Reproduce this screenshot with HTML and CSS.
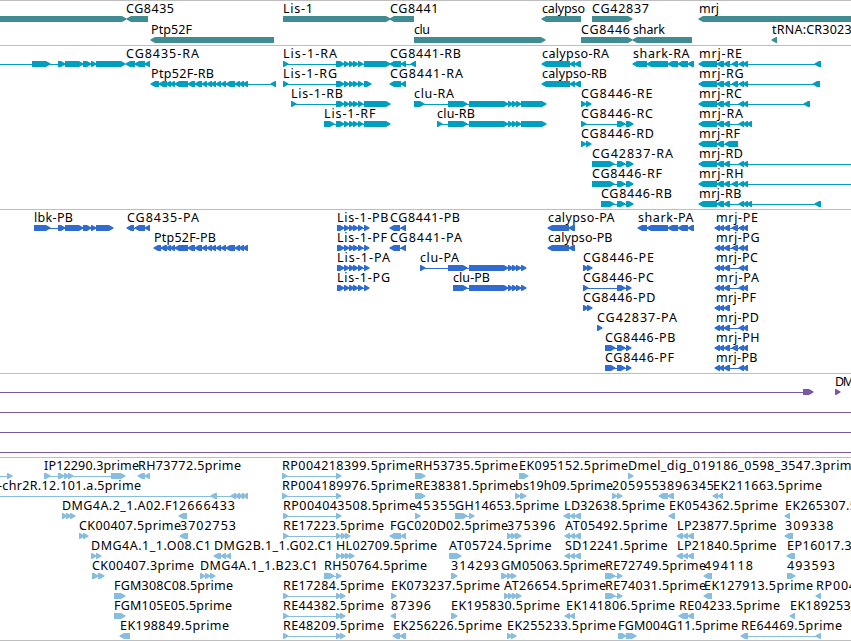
FILE: index.html
```html
<!DOCTYPE html>
<html lang="en">
<head>
    <meta charset="UTF-8">
    <meta name="viewport" content="width=device-width, initial-scale=1.0">
    <title>Genome Browser</title>
    <link rel="stylesheet" href="styles.css">
</head>
<body>
    <div class="browser">
        <svg class="track genes" id="genes"></svg>
        <svg class="track transcripts" id="transcripts"></svg>
        <svg class="track proteins" id="proteins"></svg>
        <svg class="track cdna" id="cdna"></svg>
        <svg class="track est" id="est"></svg>
    </div>
    <script src="tracks.js"></script>
</body>
</html>
```

FILE: styles.css
```css
body {
    margin: 0;
    background-color: #fff;
    overflow: hidden;
}
.browser {
    display: flex;
    flex-direction: column;
    width: 851px;
    border-bottom: 1px solid #bebebe;
}
.track {
    display: block;
    box-sizing: border-box;
    width: 100%;
    border-top: 1px solid #bebebe;
    overflow: hidden;
}
.track text {
    font-family: "Noto Sans", "DejaVu Sans", sans-serif;
    font-size: 12.5px;
    fill: #000;
}
.genes {
    height: 45px;
    color: #408c93;
}
.transcripts {
    height: 164px;
    color: #009fc0;
}
.proteins {
    height: 164px;
    color: #306ccf;
}
.cdna {
    height: 84px;
    color: #7859a8;
}
.est {
    height: 183px;
    color: #87bddf;
}
.feature {
    fill: currentColor;
}
.intron {
    shape-rendering: crispEdges;
}
```

FILE: tracks.js
```js
// feature: [row, label, label start, label end, strand, exons]
const LIS = '336-344 344-349 349-353 353-358 358-363 ';
const CLU = '448-467 469-508 508-512 512-516 516-521 ';
const PTP = '167-171 171-175 175-188 188-195 195-202 202-207 207-212 212-216 216-221 221-226 226-235 235-240 240-244 244-248';

const genes = [
    [0, '', 0, 0, '+', '-20-126'],
    [0, 'CG8435', 126, 174, '-', '127-148'],
    [1, 'Ptp52F', 151, 192, '-', '151-274'],
    [0, 'Lis-1', 283, 313, '+', '283-390'],
    [0, 'CG8441', 390, 438.5, '-', '390-414'],
    [1, 'clu', 414, 430, '+', '414-545'],
    [0, 'calypso', 542, 585, '-', '542-581'],
    [0, 'CG42837', 592, 649, '+', '592-632'],
    [1, 'CG8446', 581, 630, '+', '581-632'],
    [1, 'shark', 633, 665, '-', '633-692'],
    [0, 'mrj', 699, 719, '-', '699-880'],
    [1, 'tRNA:CR30233', 772, 859, '-', '772-777']
];

const transcripts = [
    [0, '', 0, 0, '+', '-20--10 32-50 58-65 65-83 83-91 91-96 96-125'],
    [0, 'CG8435-RA', 126, 199, '-', '126-135 135-145 145-150'],
    [1, 'Ptp52F-RB', 151, 214, '-', '151-159 159-167 ' + PTP + ' 271-276'],
    [0, 'Lis-1-RA', 283, 337, '+', '283-288 ' + LIS + '364-390'],
    [1, 'Lis-1-RG', 283, 337, '+', '283-288 ' + LIS + '364-371'],
    [2, 'Lis-1-RB', 291, 343, '+', '291-296 ' + LIS + '364-390'],
    [3, 'Lis-1-RF', 324, 375.5, '+', '324-334 ' + LIS + '364-390'],
    [0, 'CG8441-RB', 390, 461, '-', '390-401 401-406 411-416'],
    [1, 'CG8441-RA', 390, 463, '-', '390-401 401-406'],
    [2, 'clu-RA', 414, 454, '+', '414-424 ' + CLU + '521-546'],
    [3, 'clu-RB', 437, 475, '+', '437-442 ' + CLU + '521-546'],
    [0, 'calypso-RA', 542, 609, '-', '542-570 570-575 575-581'],
    [1, 'calypso-RB', 542, 607, '-', '542-570 570-575 575-581'],
    [0, 'shark-RA', 633, 689.5, '-', '633-647 647-668 668-678 678-688 688-694'],
    [2, 'CG8446-RE', 581, 652.5, '+', '581-586 586-591'],
    [3, 'CG8446-RC', 581, 653, '+', '581-586 617-625 626-633'],
    [4, 'CG8446-RD', 581, 654, '+', '581-586 586-591'],
    [5, 'CG42837-RA', 592, 673, '+', '592-614 617-625 626-633'],
    [6, 'CG8446-RF', 592, 662, '+', '592-614 617-625 626-633'],
    [7, 'CG8446-RB', 601, 672, '+', '601-614 617-625 626-633'],
    [0, 'mrj-RE', 699, 742, '-', '699-717 717-724 724-730 732-738 740-744 744-748 815-821'],
    [1, 'mrj-RG', 699, 743.5, '-', '699-717 717-724 724-730 732-738 740-744 744-748 813-820'],
    [2, 'mrj-RC', 699, 742, '-', '699-717 717-724 724-730 740-744 744-748 804-810'],
    [3, 'mrj-RA', 699, 743, '-', '699-717 717-724 724-730 740-744 744-748 748-752'],
    [4, 'mrj-RF', 699, 740, '-', '699-717 717-724 725-738'],
    [5, 'mrj-RD', 699, 743, '-', '699-717 717-724 724-730 740-744 744-748 880-890'],
    [6, 'mrj-RH', 699, 743.5, '-', '699-717 717-724 724-730 732-738 740-744 744-748 880-890'],
    [7, 'mrj-RB', 699, 741.5, '-', '699-717 717-724 724-730 740-744 744-748 748-752 815-821']
];

const proteins = [
    [0, 'lbk-PB', 34, 73, '+', '34-50 58-65 65-83 83-91 91-96 96-113'],
    [0, 'CG8435-PA', 127, 199, '-', '127-134 135-145 145-150'],
    [1, 'Ptp52F-PB', 154, 216, '-', '154-161 161-167 ' + PTP],
    [0, 'Lis-1-PB', 337, 388.5, '+', LIS.replace('336', '337') + '364-369'],
    [1, 'Lis-1-PF', 337, 387, '+', LIS.replace('336', '337') + '364-369'],
    [2, 'Lis-1-PA', 337, 390, '+', LIS.replace('336', '337') + '364-369'],
    [3, 'Lis-1-PG', 337, 390, '+', LIS.replace('336', '337') + '364-369'],
    [0, 'CG8441-PB', 390, 460, '-', '390-400 401-406'],
    [1, 'CG8441-PA', 390, 462, '-', '390-400 401-406'],
    [2, 'clu-PA', 420, 459, '+', '420-425 ' + CLU + '521-526'],
    [3, 'clu-PB', 453, 490, '+', CLU.replace('448', '453') + '521-526'],
    [0, 'calypso-PA', 548, 614.5, '-', '548-569 569-575'],
    [1, 'calypso-PB', 548, 612.5, '-', '548-569 569-575'],
    [0, 'shark-PA', 638, 693.5, '-', '638-647 647-668 668-678 678-688 688-694'],
    [2, 'CG8446-PE', 583, 654, '+', '583-587 587-591'],
    [3, 'CG8446-PC', 583, 654, '+', '583-588 617-625 626-631'],
    [4, 'CG8446-PD', 583, 655.5, '+', '583-587 587-591'],
    [5, 'CG42837-PA', 597, 677, '+', '597-602'],
    [6, 'CG8446-PB', 605, 675.5, '+', '605-615 617-625 626-631'],
    [7, 'CG8446-PF', 605, 674, '+', '605-615 617-625 626-631'],
    [0, 'mrj-PE', 716, 758, '-', '716-720 720-724 724-730 732-738 740-744 744-748'],
    [1, 'mrj-PG', 716, 759.5, '-', '716-720 720-724 724-730 732-738 740-744 744-748'],
    [2, 'mrj-PC', 716, 758, '-', '716-720 720-724 724-730 740-744 744-748'],
    [3, 'mrj-PA', 716, 759, '-', '716-720 720-724 724-730 740-744 744-748'],
    [4, 'mrj-PF', 716, 756, '-', '716-720 720-724 724-730'],
    [5, 'mrj-PD', 716, 759, '-', '716-720 720-724 724-730 740-744 744-748'],
    [6, 'mrj-PH', 716, 759.5, '-', '716-720 720-724 724-730 732-738 740-744 744-748'],
    [7, 'mrj-PB', 716, 757.5, '-', '716-720 720-724 724-730 740-744 744-748']
];

const cdna = [
    [0, '', 0, 0, '+', '-20--10 803-813'],
    [0, 'DM', 835, 854, '+', '835-840'],
    [1, '', 0, 0, '+', '-20--10 880-890'],
    [2, '', 0, 0, '+', '-20--10 880-890'],
    [3, '', 0, 0, '+', '-20--10 880-890']
];

const est = [
    [0, '', 0, 0, '+', '-20--10 7-12'],
    [0, 'IP12290.3prime', 44, 139, '+', '44-50 58-64 64-68 68-73 111-125'],
    [0, 'RH73772.5prime', 138, 241, '-', '138-145 145-150'],
    [0, 'RP004218399.5prime', 282, 415, '+', '282-287 336-341'],
    [0, 'RH53735.5prime', 415, 518, '+', '415-425'],
    [0, 'EK095152.5prime', 519, 628, '+', '519-528'],
    [0, 'Dmel_dig_019186_0598_3547.3prime', 628, 859, '+', '628-633'],

    [1, '-chr2R.12.101.a.5prime', -2, 141, '-', '-20--10 211-217 231-236 236-240 240-244 244-248'],
    [1, 'RP004189976.5prime', 282, 415, '+', '282-287 336-341'],
    [1, 'RE38381.5prime', 415, 516, '+', '415-425'],
    [1, 'bs19h09.5prime', 515, 613, '+', '515-520 520-526'],
    [1, '205955', 612, 659, '+', '612-617 617-622'],
    [1, '3896345', 659, 714, '-', '659-668 668-674'],
    [1, 'EK211663.5prime', 713, 822, '-', '713-718 718-723'],

    [2, 'DMG4A.2_1.A02.F1', 62, 179, '+', '62-66 66-70 70-74'],
    [2, '2666433', 179, 235, '-', '179-187'],
    [2, 'RP004043508.5prime', 283, 416, '+', '283-288 336-341'],
    [2, '45355', 415, 455.5, '+', '415-420'],
    [2, 'GH14653.5prime', 455, 559, '+', '455-467 469-474'],
    [2, 'LD32638.5prime', 564, 665, '-', '564-570 570-575 575-581'],
    [2, 'EK054362.5prime', 669, 778, '-', '669-675'],
    [2, 'EK265307.5prime', 785, 894, '-', '785-790'],

    [3, 'CK00407.5prime', 79, 181, '+', '79-83 83-88'],
    [3, '3702753', 180, 236, '-', '180-188'],
    [3, 'RE17223.5prime', 283, 384, '+', '283-288 336-341 341-345 345-350'],
    [3, 'FGC020D02.5prime', 390, 508, '-', '390-401 401-406'],
    [3, '375396', 507, 555.5, '+', '507-511 511-515 515-521'],
    [3, 'AT05492.5prime', 565, 667.5, '-', '565-570 570-575 575-581'],
    [3, 'LP23877.5prime', 677, 776.5, '-', '677-683 683-688 688-694'],
    [3, '309338', 785, 833.5, '-', '785-793'],

    [4, 'DMG4A.1_1.O08.C1', 91, 211, '+', '91-96 96-101'],
    [4, 'DMG2B.1_1.G02.C1', 214, 333, '-', '214-221 221-226 226-231'],
    [4, 'HL02709.5prime', 336, 437, '+', '336-341 341-345 345-349 349-354'],
    [4, 'AT05724.5prime', 449, 551.5, '+', '449-461'],
    [4, 'SD12241.5prime', 565, 667.5, '-', '565-570 570-575 575-581'],
    [4, 'LP21840.5prime', 677, 776.5, '-', '677-683 683-688 688-694'],
    [4, 'EP16017.3prime', 787, 889, '-', '787-795'],

    [5, 'CK00407.3prime', 92, 194, '+', '92-98 98-104'],
    [5, 'DMG4A.1_1.B23.C1', 200, 318, '+', '200-205 205-210 210-215'],
    [5, 'RH50764.5prime', 324, 427, '+', '324-334 336-341'],
    [5, '314293', 451, 499, '+', '451-457'],
    [5, 'GM05063.5prime', 501, 606, '+', '501-507 507-511 511-516'],
    [5, 'RE72749.5prime', 605, 706, '+', '605-615 617-622'],
    [5, '494118', 704, 753, '-', '704-712'],
    [5, '493593', 787, 835, '+', '787-795'],

    [6, 'FGM308C08.5prime', 114, 233, '+', '114-125'],
    [6, 'RE17284.5prime', 283, 384, '+', '283-288 336-340 340-344'],
    [6, 'EK073237.5prime', 391, 500, '+', '391-396'],
    [6, 'AT26654.5prime', 504, 606, '+', '504-508 508-512 512-516 516-521'],
    [6, 'RE74031.5prime', 605, 706, '+', '605-615 617-622'],
    [6, 'EK127913.5prime', 704, 813, '-', '704-712'],
    [6, 'RP004', 816, 856, '-', '816-821'],

    [7, 'FGM105E05.5prime', 114, 232, '+', '114-125'],
    [7, 'RE44382.5prime', 283, 384, '+', '283-288 336-340 340-344'],
    [7, '87396', 391, 431, '-', '391-396'],
    [7, 'EK195830.5prime', 451, 560, '+', '451-457'],
    [7, 'EK141806.5prime', 566, 675, '-', '566-570 570-575'],
    [7, 'RE04233.5prime', 679, 780, '-', '679-688 688-694'],
    [7, 'EK189253.5prime', 790, 899, '-', '790-795'],

    [8, 'EK198849.5prime', 120, 229, '-', '120-130'],
    [8, 'RE48209.5prime', 283, 384, '+', '283-288 336-340 340-344'],
    [8, 'EK256226.5prime', 393, 502, '-', '393-400 400-406'],
    [8, 'EK255233.5prime', 507, 616, '+', '507-511 511-516'],
    [8, 'FGM004G11.5prime', 618, 738, '+', '618-626 626-636'],
    [8, 'RE64469.5prime', 741, 842, '-', '741-748 816-821']
];

const SVG_NS = 'http://www.w3.org/2000/svg';

function add(parent, name, attrs) {
    const el = document.createElementNS(SVG_NS, name);
    for (const key in attrs) {
        el.setAttribute(key, attrs[key]);
    }
    parent.appendChild(el);
    return el;
}

// block with an arrow head on its leading end, short ones run into the next block
function exonPath(start, end, strand, y) {
    if (strand === '+') {
        const tip = Math.max(end, start + 5) + 0.5;
        return `M${start} ${y}H${tip - 4.5}L${tip} ${y + 2.5}V${y + 3.5}L${tip - 4.5} ${y + 6}H${start}Z`;
    }
    const tip = Math.min(start, end - 5) - 0.5;
    return `M${end} ${y}H${tip + 4.5}L${tip} ${y + 2.5}V${y + 3.5}L${tip + 4.5} ${y + 6}H${end}Z`;
}

function drawTrack(id, features, rowHeight) {
    const svg = document.getElementById(id);
    features.forEach(([row, label, x1, x2, strand, blocks]) => {
        const top = row * rowHeight;
        const exons = [...blocks.matchAll(/(-?\d+)-(-?\d+)/g)].map(m => [Number(m[1]), Number(m[2])]);
        const start = exons[0][0];
        const end = exons[exons.length - 1][1];

        if (exons.length > 1) {
            add(svg, 'rect', { class: 'feature intron', x: start + 1, y: top + 18, width: end - start - 2, height: 1 });
        }
        exons.forEach(([a, b]) => {
            add(svg, 'path', { class: 'feature', d: exonPath(a, b, strand, top + 15) });
        });
        if (label) {
            const text = add(svg, 'text', { x: x1, y: top + 12, textLength: x2 - x1 });
            text.textContent = label;
        }
    });
}

drawTrack('genes', genes, 21);
drawTrack('transcripts', transcripts, 20);
drawTrack('proteins', proteins, 20);
drawTrack('cdna', cdna, 20);
drawTrack('est', est, 20);
```
